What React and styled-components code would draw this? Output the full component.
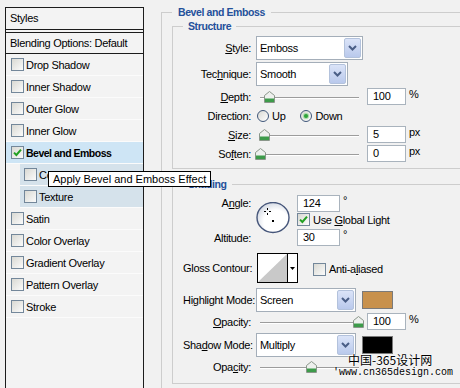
import React from 'react'
import styled, { createGlobalStyle } from 'styled-components'

const GlobalStyle = createGlobalStyle`
  html, body { margin: 0; padding: 0; background: #f1f1f1; overflow: hidden; }
  body {
    font-family: "Liberation Sans", Arial, sans-serif;
    font-size: 11px;
    letter-spacing: -0.3px;
    color: #000;
  }
`

const styleItems = [
  { name: 'Drop Shadow' },
  { name: 'Inner Shadow' },
  { name: 'Outer Glow' },
  { name: 'Inner Glow' },
  { name: 'Bevel and Emboss', checked: true, active: true },
  { name: 'Contour', sub: true },
  { name: 'Texture', sub: true },
  { name: 'Satin' },
  { name: 'Color Overlay' },
  { name: 'Gradient Overlay' },
  { name: 'Pattern Overlay' },
  { name: 'Stroke' },
]

const Check = ({ checked }) => (
  <CheckBox>
    {checked && (
      <svg width="9" height="9" viewBox="0 0 9 9">
        <path d="M1 4.6 L3.4 7 L8 1.6" fill="none" stroke="#22a022" strokeWidth="2" />
      </svg>
    )}
  </CheckBox>
)

const Radio = ({ checked }) => (
  <RadioCircle>{checked && <RadioDot />}</RadioCircle>
)

const Chevron = () => (
  <svg width="9" height="6" viewBox="0 0 9 6">
    <path d="M1 1 L4.5 4.5 L8 1" fill="none" stroke="#4a5e86" strokeWidth="2" />
  </svg>
)

const Select = ({ value, width }) => (
  <SelectBox $w={width}>
    <SelectText>{value}</SelectText>
    <SelectButton><Chevron /></SelectButton>
  </SelectBox>
)

const Slider = ({ pos }) => (
  <SliderTrack>
    <Thumb $pos={pos} width="11" height="12" viewBox="0 0 11 12">
      <path d="M5.5 0.5 L10.5 4.5 L10.5 11.5 L0.5 11.5 L0.5 4.5 Z" fill="#eef0ee" stroke="#8a968a" />
      <rect x="1" y="7.5" width="9" height="3.5" fill="#3d9b4a" />
    </Thumb>
  </SliderTrack>
)

const App = () => {
  return (
    <Page>
      <GlobalStyle />
      <StylesPanel>
        <PanelHeader>Styles</PanelHeader>
        <BlendRow>Blending Options: Default</BlendRow>
        {styleItems.map((item) => (
          <ItemRow key={item.name} $active={item.active} $sub={item.sub}>
            <Check checked={item.checked} />
            <ItemName $bold={item.active}>{item.name}</ItemName>
          </ItemRow>
        ))}
      </StylesPanel>

      <Settings>
        <Group $outer>
          <Legend $pad={6}>Bevel and Emboss</Legend>
          <Group $top={1} $pt={3} $pb={6}>
            <Legend $pad={5}>Structure</Legend>
            <Row $h={24}>
              <Label><u>S</u>tyle:</Label>
              <Select value="Emboss" width={107} />
            </Row>
            <Row $h={24} $mt={2}>
              <Label>Tec<u>h</u>nique:</Label>
              <Select value="Smooth" width={92} />
            </Row>
            <Row $mt={2}>
              <Label><u>D</u>epth:</Label>
              <Slider pos={0.087} />
              <TextBox>100</TextBox>
              <Unit>%</Unit>
            </Row>
            <Row $mt={2}>
              <Label>Direction:</Label>
              <RadioOption><Radio />Up</RadioOption>
              <RadioOption $gap={15}><Radio checked />Down</RadioOption>
            </Row>
            <Row $mt={2}>
              <Label><u>S</u>ize:</Label>
              <Slider pos={0.04} />
              <TextBox>5</TextBox>
              <Unit>px</Unit>
            </Row>
            <Row $mt={2}>
              <Label>So<u>f</u>ten:</Label>
              <Slider pos={0} />
              <TextBox>0</TextBox>
              <Unit>px</Unit>
            </Row>
          </Group>

          <Group $top={9} $pt={4} $pb={8}>
            <Legend $pad={5}>Shading</Legend>
            <AngleBlock>
              <LabelColumn>
                <Label>A<u>n</u>gle:</Label>
                <Label>Altitude:</Label>
              </LabelColumn>
              <Dial width="35" height="32" viewBox="0 0 35 32">
                <defs>
                  <radialGradient id="dialFill" cx="0.6" cy="0.65" r="0.7">
                    <stop offset="0.55" stopColor="#ffffff" />
                    <stop offset="1" stopColor="#cfd5e0" />
                  </radialGradient>
                </defs>
                <ellipse cx="17" cy="15.5" rx="16" ry="15" fill="url(#dialFill)" stroke="#46567a" strokeWidth="1.4" />
                <rect x="16" y="18" width="2" height="2" fill="#000" />
                <path d="M11.5 6 V8 M11.5 11 V13 M8 9.5 H10 M13 9.5 H15" stroke="#000" strokeWidth="1" />
              </Dial>
              <FieldColumn>
                <FieldLine>
                  <TextBox $w={43}>124</TextBox>
                  <Degree>°</Degree>
                </FieldLine>
                <FieldLine $h={15}>
                  <Check checked />
                  <CheckLabel>Use <u>G</u>lobal Light</CheckLabel>
                </FieldLine>
                <FieldLine>
                  <TextBox $w={43}>30</TextBox>
                  <Degree>°</Degree>
                </FieldLine>
              </FieldColumn>
            </AngleBlock>
            <Row $h={30} $mt={6}>
              <Label>Gloss Contour:</Label>
              <ContourPicker>
                <ContourPreview width="29" height="28" viewBox="0 0 29 28">
                  <rect width="29" height="28" fill="#fff" />
                  <path d="M0 28 L29 0 L29 28 Z" fill="#c9c9c9" />
                </ContourPreview>
                <ContourArrow>
                  <svg width="5" height="3" viewBox="0 0 5 3"><path d="M0 0 H5 L2.5 3 Z" fill="#000" /></svg>
                </ContourArrow>
              </ContourPicker>
              <AntiAlias>
                <Check />
                <CheckLabel>Anti-a<u>l</u>iased</CheckLabel>
              </AntiAlias>
            </Row>
            <Row $h={24} $mt={5}>
              <Label>Hi<u>g</u>hlight Mode:</Label>
              <Select value="Screen" width={100} />
              <Swatch $color="#c8914c" />
            </Row>
            <Row $mt={1}>
              <Label><u>O</u>pacity:</Label>
              <Slider pos={1} />
              <TextBox>100</TextBox>
              <Unit>%</Unit>
            </Row>
            <Row $h={24} $mt={3}>
              <Label>Sha<u>d</u>ow Mode:</Label>
              <Select value="Multiply" width={100} />
              <Swatch $color="#000" />
            </Row>
            <Row $mt={1}>
              <Label>Opa<u>c</u>ity:</Label>
              <Slider pos={0.525} />
            </Row>
          </Group>
        </Group>
      </Settings>

      <Tooltip>Apply Bevel and Emboss Effect</Tooltip>
      <Watermark>
        <WatermarkTitle>中国-365设计网</WatermarkTitle>
        <WatermarkUrl>'www.cn365design.com</WatermarkUrl>
      </Watermark>
    </Page>
  )
}

export default App

const Page = styled.div`
  position: relative;
  display: flex;
  align-items: flex-start;
  width: 460px;
  height: 388px;
  overflow: hidden;
  background: #f1f1f1;
`

/* left list */
const StylesPanel = styled.div`
  flex: none;
  width: 139px;
  height: 400px;
  margin: 7px 0 0 5px;
  box-sizing: border-box;
  border: 1px solid #1c1c1c;
  border-bottom: none;
  background: #f3f3f3;
`
const PanelHeader = styled.div`
  height: 21px;
  line-height: 21px;
  padding-left: 4px;
  border-bottom: 4px double #1c1c1c;
`
const BlendRow = styled.div`
  height: 20px;
  line-height: 20px;
  padding-left: 4px;
  border-bottom: 1px solid #1c1c1c;
`
const ItemRow = styled.div`
  display: flex;
  align-items: center;
  height: 21px;
  border-bottom: 1px solid #fbfbfb;
  margin-left: ${(p) => (p.$sub ? 14 : 0)}px;
  padding-left: ${(p) => (p.$sub ? 4 : 5)}px;
  background: ${(p) => (p.$active ? '#cee5f5' : p.$sub ? '#d5e2eb' : '#f3f3f3')};
`
const ItemName = styled.span`
  margin-left: 2px;
  white-space: nowrap;
  font-weight: ${(p) => (p.$bold ? 'bold' : 'normal')};
  font-size: ${(p) => (p.$bold ? '10.5px' : '11px')};
  letter-spacing: ${(p) => (p.$bold ? '-0.5px' : '-0.3px')};
`
const CheckBox = styled.span`
  flex: none;
  display: inline-flex;
  align-items: center;
  justify-content: center;
  width: 13px;
  height: 13px;
  box-sizing: border-box;
  border: 1px solid #73879a;
  background: linear-gradient(135deg, #d9d9d3, #fbfbfb);
`

/* right settings */
const Settings = styled.div`
  flex: none;
  width: 330px;
  margin: 6px 0 0 17px;
`
const Group = styled.fieldset`
  margin: ${(p) => p.$top || 0}px 0 0 0;
  padding: ${(p) => p.$pt || 0}px 0 ${(p) => p.$pb || 0}px 10px;
  border: 1px solid #cdcdcd;
  min-width: 0;
  height: ${(p) => (p.$outer ? '420px' : 'auto')};
  box-sizing: border-box;
`
const Legend = styled.legend`
  padding: 0 ${(p) => p.$pad}px;
  font-weight: bold;
  font-size: 10.5px;
  letter-spacing: -0.4px;
  line-height: 13px;
  color: #24509a;
`
const Row = styled.div`
  display: flex;
  align-items: center;
  height: ${(p) => p.$h || 17}px;
  margin-top: ${(p) => p.$mt || 0}px;
`
const Label = styled.span`
  flex: none;
  width: 68px;
  margin-right: 5px;
  text-align: right;
  white-space: nowrap;
`
const SelectBox = styled.div`
  flex: none;
  display: flex;
  width: ${(p) => p.$w}px;
  height: 24px;
  box-sizing: border-box;
  border: 1px solid #a4aeb9;
  background: #fff;
`
const SelectText = styled.span`
  flex: 1;
  padding-left: 3px;
  line-height: 22px;
`
const SelectButton = styled.span`
  flex: none;
  display: flex;
  align-items: center;
  justify-content: center;
  width: 15px;
  margin: 1px;
  border: 1px solid #b3c2dc;
  border-radius: 2px;
  background: linear-gradient(#dbe4f8, #b9c9ec);
`
const SliderTrack = styled.div`
  position: relative;
  flex: none;
  width: 109px;
  height: 12px;
  margin-left: -1px;
  &::before {
    content: '';
    position: absolute;
    left: 5px;
    right: 5px;
    top: 6px;
    height: 1px;
    background: #9c9c9c;
    border-bottom: 1px solid #fff;
  }
`
const Thumb = styled.svg`
  position: absolute;
  top: 0;
  left: ${(p) => p.$pos * 98}px;
`
const TextBox = styled.span`
  flex: none;
  width: ${(p) => p.$w || 39}px;
  height: 17px;
  margin-left: ${(p) => (p.$w ? 0 : 3)}px;
  box-sizing: border-box;
  border: 1px solid #a9b3bd;
  background: #fff;
  padding-left: 5px;
  line-height: 15px;
`
const Unit = styled.span`
  margin-left: 3px;
  align-self: flex-start;
  line-height: 12px;
`
const RadioOption = styled.span`
  display: flex;
  align-items: center;
  gap: 3px;
  margin-left: ${(p) => p.$gap || 1}px;
`
const RadioCircle = styled.span`
  flex: none;
  display: inline-flex;
  align-items: center;
  justify-content: center;
  width: 12px;
  height: 12px;
  box-sizing: border-box;
  border-radius: 50%;
  border: 1px solid #3f5679;
  background: linear-gradient(135deg, #d9d9d3, #fff);
`
const RadioDot = styled.span`
  width: 4px;
  height: 4px;
  border-radius: 50%;
  background: #2fa33a;
  box-shadow: 0 0 1px 1px #9fd79f;
`
const AngleBlock = styled.div`
  display: flex;
  height: 52px;
`
const LabelColumn = styled.div`
  display: flex;
  flex-direction: column;
  justify-content: space-between;
  padding: 2px 0 3px;
`
const Dial = styled.svg`
  flex: none;
  margin: 7px 6px 0 0;
`
const FieldColumn = styled.div`
  display: flex;
  flex-direction: column;
`
const FieldLine = styled.div`
  display: flex;
  align-items: center;
  height: ${(p) => p.$h || 17}px;
  margin-bottom: ${(p) => (p.$h ? 3 : 1)}px;
`
const Degree = styled.span`
  margin-left: 3px;
  align-self: flex-start;
  line-height: 10px;
`
const CheckLabel = styled.span`
  margin-left: 3px;
  white-space: nowrap;
`
const ContourPicker = styled.div`
  flex: none;
  display: flex;
  height: 30px;
  box-sizing: border-box;
  border: 1px solid #000;
  margin-left: 1px;
  background: #fff;
`
const ContourPreview = styled.svg`
  display: block;
  border-right: 1px solid #000;
`
const ContourArrow = styled.span`
  display: flex;
  align-items: center;
  justify-content: center;
  width: 9px;
`
const AntiAlias = styled.span`
  display: flex;
  align-items: center;
  margin-left: 15px;
  margin-top: 2px;
`
const Swatch = styled.span`
  flex: none;
  width: 31px;
  height: 18px;
  margin-left: 6px;
  background: ${(p) => p.$color};
  border: 1px solid #7a7a7a;
  box-sizing: border-box;
`

/* overlays */
const Tooltip = styled.div`
  position: absolute;
  left: 48px;
  top: 171px;
  height: 16px;
  box-sizing: border-box;
  padding: 0 4px;
  border: 1px solid #000;
  background: #fff;
  line-height: 14px;
  font-size: 11px;
  letter-spacing: 0;
  white-space: nowrap;
`
const Watermark = styled.div`
  position: absolute;
  left: 333px;
  top: 353px;
  display: flex;
  flex-direction: column;
`
const WatermarkTitle = styled.span`
  padding-left: 15px;
  font-family: "Noto Sans CJK SC", sans-serif;
  font-size: 12px;
  line-height: 14px;
  letter-spacing: 0;
  text-shadow: 0 0 2px #fff, 0 0 2px #fff;
`
const WatermarkUrl = styled.span`
  font-family: "Liberation Mono", monospace;
  font-size: 10px;
  line-height: 11px;
  letter-spacing: 0;
  text-shadow: 0 0 2px #fff;
`
